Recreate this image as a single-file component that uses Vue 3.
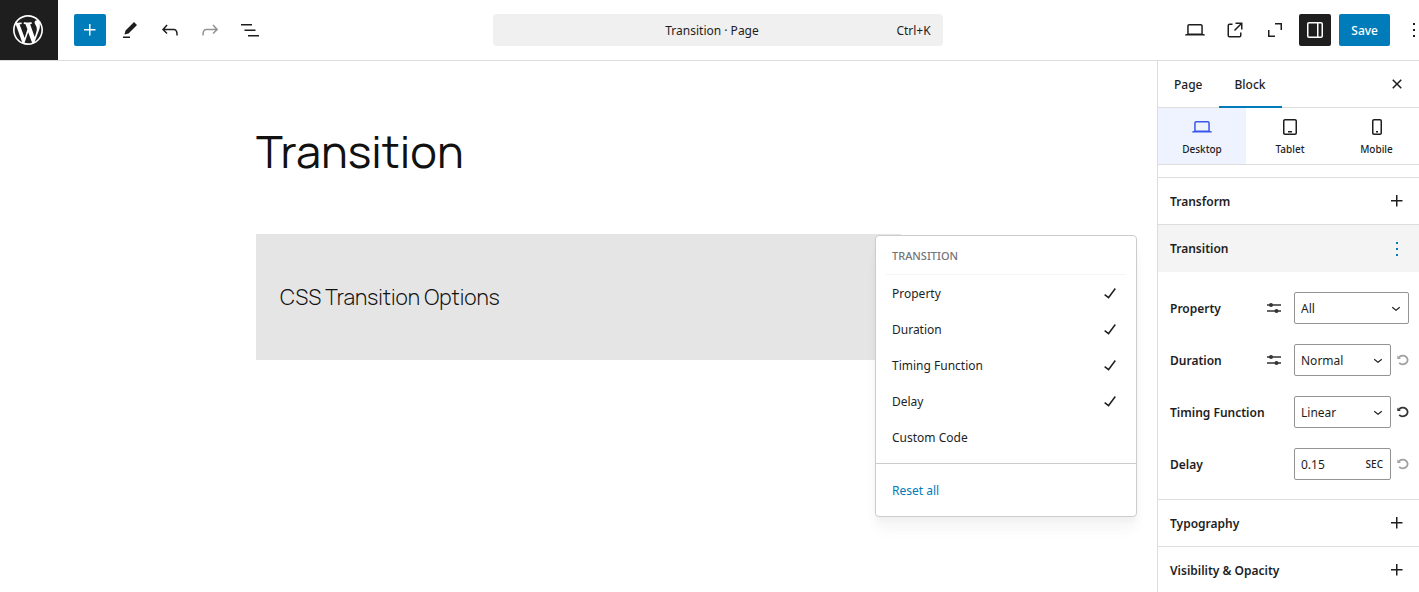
<script setup>
import { ref } from 'vue'

const icons = {
  plus: 'M11 12.5V17.5H12.5V12.5H17.5V11H12.5V6H11V11H6V12.5H11Z',
  pencil: 'm19 7-3-3-8.5 8.5-1 4 4-1L19 7Zm-7 11.5H5V20h7v-1.5Z',
  undo: 'M18.3 11.7c-.6-.6-1.4-.9-2.3-.9H6.7l2.9-3.3-1.1-1-4.5 5L8.5 16l1-1-2.7-2.7H16c.5 0 .9.2 1.3.5 1 1 1 3.4 1 4.5v.3h1.5v-.2c0-1.5 0-4.3-1.5-5.7z',
  redo: 'M15.6 6.5l-1.1 1 2.9 3.3H8c-.9 0-1.7.3-2.3.9-1.4 1.5-1.4 4.2-1.4 5.6v.2h1.5v-.3c0-1.1 0-3.5 1-4.5.3-.3.7-.5 1.3-.5h9.2L14.5 15l1.1 1.1 4.6-4.6-4.6-5z',
  list: 'M3 6h11v1.5H3V6Zm3.5 5.5h11V13h-11v-1.5ZM21 17H10v1.5h11V17Z',
  desktop: 'M20.5 16h-.7V8c0-1.1-.9-2-2-2H6.2c-1.1 0-2 .9-2 2v8h-.7c-.8 0-1.5.7-1.5 1.5h20c0-.8-.7-1.5-1.5-1.5zM5.7 8c0-.3.2-.5.5-.5h11.6c.3 0 .5.2.5.5v7.6H5.7V8z',
  tablet: 'M17 4H7c-1.1 0-2 .9-2 2v12c0 1.1.9 2 2 2h10c1.1 0 2-.9 2-2V6c0-1.1-.9-2-2-2zm.5 14c0 .3-.2.5-.5.5H7c-.3 0-.5-.2-.5-.5V6c0-.3.2-.5.5-.5h10c.3 0 .5.2.5.5v12zm-7.5-.5h4V16h-4v1.5z',
  mobile: 'M15 4H9c-1.1 0-2 .9-2 2v12c0 1.1.9 2 2 2h6c1.1 0 2-.9 2-2V6c0-1.1-.9-2-2-2zm.5 14c0 .3-.2.5-.5.5H9c-.3 0-.5-.2-.5-.5V6c0-.3.2-.5.5-.5h6c.3 0 .5.2.5.5v12zm-4.5-.5h2V16h-2v1.5z',
  external: 'M19.5 4.5h-7V6h4.44l-5.97 5.97 1.06 1.06L18 7.06v4.44h1.5v-7Zm-13 1a2 2 0 0 0-2 2v10a2 2 0 0 0 2 2h10a2 2 0 0 0 2-2v-3H17v3a.5.5 0 0 1-.5.5h-10a.5.5 0 0 1-.5-.5v-10a.5.5 0 0 1 .5-.5h3V5.5h-3Z',
  expand: 'M12 5h7v7h-1.5V6.5H12V5ZM5 12h1.5v5.5H12V19H5v-7Z',
  drawer: 'M18 4H6c-1.1 0-2 .9-2 2v12c0 1.1.9 2 2 2h12c1.1 0 2-.9 2-2V6c0-1.1-.9-2-2-2zm-4 14.5H6c-.3 0-.5-.2-.5-.5V6c0-.3.2-.5.5-.5h8v13zm4.5-.5c0 .3-.2.5-.5.5h-2.5v-13H18c.3 0 .5.2.5.5v12z',
  more: 'M13 19h-2v-2h2v2zm0-6h-2v-2h2v2zm0-6h-2V5h2v2z',
  close: 'M12 13.06l3.712 3.713 1.061-1.06L13.061 12l3.712-3.712-1.06-1.06L12 10.938 8.288 7.227l-1.061 1.06L10.939 12l-3.712 3.712 1.06 1.061L12 13.061z',
  check: 'M16.7 7.1l-6.3 8.5-3.3-2.5-.9 1.2 4.5 3.4L17.9 8z',
  chevron: 'M17.5 11.6L12 16l-5.5-4.4.9-1.2L12 14l4.5-3.6 1 1.2z',
  wordpress: 'M20 10c0-5.51-4.49-10-10-10C4.48 0 0 4.49 0 10c0 5.52 4.48 10 10 10 5.51 0 10-4.48 10-10zM7.78 15.37L4.37 6.22c.55-.02 1.17-.08 1.17-.08.5-.06.44-1.13-.06-1.11 0 0-1.45.11-2.37.11-.18 0-.37 0-.58-.01C4.12 2.69 6.87 1.11 10 1.11c2.33 0 4.45.87 6.05 2.34-.68-.11-1.65.39-1.65 1.58 0 .74.45 1.36.9 2.1.35.61.55 1.36.55 2.46 0 1.49-1.4 5-1.4 5l-3.03-8.37c.54-.02.82-.17.82-.17.5-.05.44-1.25-.06-1.22 0 0-1.44.12-2.38.12-.87 0-2.33-.12-2.33-.12-.5-.03-.56 1.2-.06 1.22l.92.08 1.26 3.41zM17.41 10c.24-.64.74-1.87.43-4.25.7 1.29 1.05 2.71 1.05 4.25 0 3.29-1.73 6.24-4.4 7.78.97-2.59 1.94-5.2 2.92-7.78zM6.1 18.09C3.12 16.65 1.11 13.53 1.11 10c0-1.3.23-2.48.72-3.59C3.25 10.3 4.67 14.2 6.1 18.09zm4.03-6.63l2.58 6.98c-.86.29-1.76.45-2.71.45-.79 0-1.57-.11-2.29-.33.81-2.38 1.62-4.74 2.42-7.1z',
}

const tools = [
  { icon: 'plus', label: 'Block Inserter', cls: 'primary' },
  { icon: 'pencil', label: 'Tools' },
  { icon: 'undo', label: 'Undo' },
  { icon: 'redo', label: 'Redo', cls: 'faded' },
  { icon: 'list', label: 'Document Overview' },
]
const actions = [
  { icon: 'desktop', label: 'View' },
  { icon: 'external', label: 'View Page' },
  { icon: 'expand', label: 'Fullscreen' },
  { icon: 'drawer', label: 'Settings', cls: 'dark' },
]
const devices = [
  { icon: 'desktop', label: 'Desktop' },
  { icon: 'tablet', label: 'Tablet' },
  { icon: 'mobile', label: 'Mobile' },
]
const device = ref('Desktop')
const tab = ref('Block')
const fields = [
  { id: 'property', label: 'Property', options: ['All', 'None', 'Opacity', 'Transform'], custom: true },
  { id: 'duration', label: 'Duration', options: ['Normal', 'Fast', 'Slow'], custom: true, reset: 'light' },
  { id: 'timing', label: 'Timing Function', options: ['Linear', 'Ease', 'Ease In'], reset: 'strong' },
  { id: 'delay', label: 'Delay', unit: 'SEC', reset: 'light' },
]
const values = ref({ property: 'All', duration: 'Normal', timing: 'Linear', delay: '0.15' })
const menu = ref([
  { label: 'Property', on: true },
  { label: 'Duration', on: true },
  { label: 'Timing Function', on: true },
  { label: 'Delay', on: true },
  { label: 'Custom Code', on: false },
])
</script>

<template>
  <div class="editor">
    <header class="topbar">
      <a class="home" href="#" aria-label="View Pages">
        <svg class="logo" viewBox="-2 -2 24 24"><path :d="icons.wordpress" /></svg>
      </a>
      <div class="tools">
        <button v-for="t in tools" :key="t.label" class="tool" :class="t.cls" :aria-label="t.label">
          <svg class="icon" viewBox="0 0 24 24"><path :d="icons[t.icon]" /></svg>
        </button>
      </div>
      <div class="center">
        <button class="command">
          <span class="doc">Transition · Page</span>
          <span>Ctrl+K</span>
        </button>
      </div>
      <div class="actions">
        <button v-for="a in actions" :key="a.label" class="tool" :class="a.cls" :aria-label="a.label">
          <svg class="icon" viewBox="0 0 24 24"><path :d="icons[a.icon]" /></svg>
        </button>
        <button class="save">Save</button>
        <button class="tool options" aria-label="Options">
          <svg class="icon" viewBox="0 0 24 24"><path :d="icons.more" /></svg>
        </button>
      </div>
    </header>

    <div class="body">
      <main class="canvas">
        <article class="post">
          <h1>Transition</h1>
          <div class="block"><p>CSS Transition Options</p></div>
        </article>

        <div class="menu" role="menu" aria-label="Transition options">
          <div class="menu-group">
            <div class="menu-title">TRANSITION</div>
            <button
              v-for="m in menu"
              :key="m.label"
              class="menu-item"
              role="menuitemcheckbox"
              :aria-checked="m.on"
              @click="m.on = !m.on"
            >
              {{ m.label }}
              <svg v-if="m.on" class="icon" viewBox="0 0 24 24"><path :d="icons.check" /></svg>
            </button>
          </div>
          <div class="menu-group last">
            <button class="menu-item reset-all" role="menuitem">Reset all</button>
          </div>
        </div>
      </main>

      <aside class="sidebar">
        <div class="tabs">
          <button
            v-for="t in ['Page', 'Block']"
            :key="t"
            class="tab"
            :class="{ active: tab === t }"
            @click="tab = t"
          >{{ t }}</button>
          <button class="close" aria-label="Close Settings">
            <svg class="icon" viewBox="0 0 24 24"><path :d="icons.close" /></svg>
          </button>
        </div>

        <div class="devices">
          <button
            v-for="d in devices"
            :key="d.label"
            class="device"
            :class="{ active: device === d.label }"
            @click="device = d.label"
          >
            <svg class="icon" viewBox="0 0 24 24"><path :d="icons[d.icon]" /></svg>
            <span>{{ d.label }}</span>
          </button>
        </div>

        <div class="panels">
          <button class="panel">
            Transform
            <svg class="icon" viewBox="0 0 24 24"><path :d="icons.plus" /></svg>
          </button>
          <button class="panel open">
            Transition
            <svg class="icon" viewBox="0 0 24 24"><path :d="icons.more" /></svg>
          </button>

          <div class="fields">
            <div v-for="f in fields" :key="f.id" class="row">
              <label :for="f.id">{{ f.label }}</label>
              <button v-if="f.custom" class="custom" :aria-label="'Custom ' + f.label">
                <svg viewBox="0 0 14 12">
                  <path d="M0 3h14M0 9h14" fill="none" stroke="currentColor" stroke-width="1.5" />
                  <circle cx="4" cy="3" r="2" /><circle cx="9.5" cy="9" r="2" />
                </svg>
              </button>
              <div class="field">
                <div class="control">
                  <template v-if="f.options">
                    <select :id="f.id" v-model="values[f.id]">
                      <option v-for="o in f.options" :key="o">{{ o }}</option>
                    </select>
                    <svg class="chevron" viewBox="0 0 24 24"><path :d="icons.chevron" /></svg>
                  </template>
                  <template v-else>
                    <input :id="f.id" v-model="values[f.id]" type="text" />
                    <span class="unit">{{ f.unit }}</span>
                  </template>
                </div>
                <button v-if="f.reset" class="reset" :class="f.reset" :aria-label="'Reset ' + f.label">
                  <svg viewBox="0 0 12 12">
                    <path d="M2 3.4A4.8 4.3 0 1 1 2.2 8.8" fill="none" stroke="currentColor" stroke-width="1.8" />
                    <path d="M.3 1.4v3.6h3.6z" />
                  </svg>
                </button>
              </div>
            </div>
          </div>

          <button v-for="p in ['Typography', 'Visibility & Opacity']" :key="p" class="panel">
            {{ p }}
            <svg class="icon" viewBox="0 0 24 24"><path :d="icons.plus" /></svg>
          </button>
        </div>
      </aside>
    </div>
  </div>
</template>

<style>
body {
  margin: 0;
  background: #fff;
}
</style>

<style scoped>
.editor,
.editor * {
  box-sizing: border-box;
}
.editor {
  display: flex;
  flex-direction: column;
  height: 100vh;
  overflow: hidden;
  color: #1e1e1e;
  font: 12px/21px "Noto Sans", "Open Sans", sans-serif;
}
button,
input,
select {
  margin: 0;
  padding: 0;
  border: 0;
  background: none;
  color: inherit;
  font: inherit;
}
button {
  cursor: pointer;
}
svg {
  display: block;
  flex: none;
  fill: currentColor;
}
.icon {
  width: 24px;
  height: 24px;
}

.topbar {
  display: flex;
  flex: none;
  align-items: center;
  height: 61px;
  border-bottom: 1px solid #ddd;
  overflow: hidden;
}
.home {
  display: flex;
  align-items: center;
  justify-content: center;
  align-self: stretch;
  width: 58px;
  padding-right: 2px;
  background: #1e1e1e;
  color: #fff;
}
.logo {
  width: 36px;
  height: 36px;
}
.tools {
  display: flex;
  gap: 8px;
  margin-left: 16px;
}
.tool {
  display: flex;
  align-items: center;
  justify-content: center;
  flex: none;
  width: 32px;
  height: 32px;
  border-radius: 2px;
}
.primary {
  background: #007cba;
  color: #fff;
}
.faded {
  color: #949494;
}
.dark {
  background: #1e1e1e;
  color: #fff;
}
.center {
  display: flex;
  flex: 1;
  justify-content: center;
}
.command {
  display: flex;
  align-items: center;
  width: 450px;
  height: 32px;
  padding: 0 12px 0 35px;
  border-radius: 4px;
  background: #f0f0f0;
}
.doc {
  flex: 1;
  text-align: center;
}
.actions {
  display: flex;
  gap: 8px;
  margin-right: -11px;
  padding-left: 10px;
}
.save {
  height: 32px;
  padding: 0 12px;
  border-radius: 2px;
  background: #007cba;
  color: #fff;
  font-weight: 500;
}

.body {
  display: flex;
  flex: 1;
  min-height: 0;
}
.canvas {
  position: relative;
  flex: 1;
  min-width: 0;
}
.post {
  max-width: 645px;
  margin: 0 auto;
  padding-top: 63px;
  color: #111;
  font-family: Manrope, Inter, sans-serif;
  font-weight: 300;
}
h1 {
  margin: 0 0 56px;
  font-size: 45px;
  line-height: 54px;
  font-weight: 400;
}
.block {
  padding: 48px 24px;
  background: #e5e5e5;
}
.block p {
  margin: 0;
  font-size: 21px;
  line-height: 30px;
}

.menu {
  position: absolute;
  top: 174px;
  right: 20px;
  width: 262px;
  border: 1px solid #ccc;
  border-radius: 4px;
  background: #fff;
  box-shadow: 0 4px 5px rgba(0, 0, 0, 0.03), 0 12px 12px rgba(0, 0, 0, 0.02), 0 16px 16px rgba(0, 0, 0, 0.02);
}
.menu-group {
  padding: 8px 10px;
}
.menu-group.last {
  border-top: 1px solid #ccc;
}
.menu-title {
  padding: 0 6px 6px;
  border-bottom: 1px solid #f4f4f4;
  color: #757575;
  font-size: 11px;
  line-height: 24px;
  font-weight: 500;
}
.menu-item {
  display: flex;
  align-items: center;
  justify-content: space-between;
  width: 100%;
  height: 36px;
  padding: 0 4px 0 6px;
}
.reset-all {
  color: #007cba;
}

.sidebar {
  flex: none;
  width: 262px;
  border-left: 1px solid #ddd;
  overflow-y: auto;
  scrollbar-width: none;
}
.tabs {
  display: flex;
  align-items: center;
  height: 47px;
  padding-right: 10px;
  border-bottom: 1px solid #ddd;
}
.tab {
  height: 47px;
  padding: 0 16px;
  border-bottom: 2px solid transparent;
  border-top: 2px solid transparent;
  font-weight: 500;
}
.tab.active {
  border-bottom-color: #007cba;
}
.close {
  margin-left: auto;
}
.devices {
  display: grid;
  grid-template-columns: 88px 88px 1fr;
  border-bottom: 1px solid #ddd;
}
.device {
  display: flex;
  flex-direction: column;
  align-items: center;
  height: 56px;
  padding-top: 7px;
  font-size: 10px;
  font-weight: 500;
}
.device.active {
  background: #eff3ff;
}
.device.active .icon {
  color: #3858e9;
}
.panels {
  padding-top: 12px;
}
.panel {
  display: flex;
  align-items: center;
  justify-content: space-between;
  width: 100%;
  height: 47px;
  padding: 0 10px 0 12px;
  border-top: 1px solid #ddd;
  font-weight: 600;
}
.open {
  height: 48px;
  background: #f4f4f4;
}
.open .icon {
  color: #007cba;
}
.fields {
  display: grid;
  gap: 20px;
  padding: 20px 10px 19px 12px;
}
.row {
  display: flex;
  align-items: center;
}
label {
  flex: 1;
  font-weight: 600;
  white-space: nowrap;
}
.custom {
  margin-right: 13px;
  color: #333;
}
.custom svg {
  width: 14px;
  height: 12px;
}
.field {
  display: flex;
  align-items: center;
  gap: 6px;
  width: 115px;
}
.control {
  position: relative;
  display: flex;
  align-items: center;
  flex: 1;
  min-width: 0;
  height: 32px;
  border: 1px solid #949494;
  border-radius: 2px;
}
select,
input {
  width: 100%;
  min-width: 0;
  height: 30px;
  padding-left: 6px;
  appearance: none;
}
.chevron {
  position: absolute;
  right: 3px;
  width: 18px;
  height: 18px;
  pointer-events: none;
}
.unit {
  padding: 0 7px;
  font-size: 10px;
  font-weight: 500;
}
.reset svg {
  width: 12px;
  height: 12px;
}
.light {
  color: #a0a0a0;
}
.strong {
  color: #333;
}
</style>
